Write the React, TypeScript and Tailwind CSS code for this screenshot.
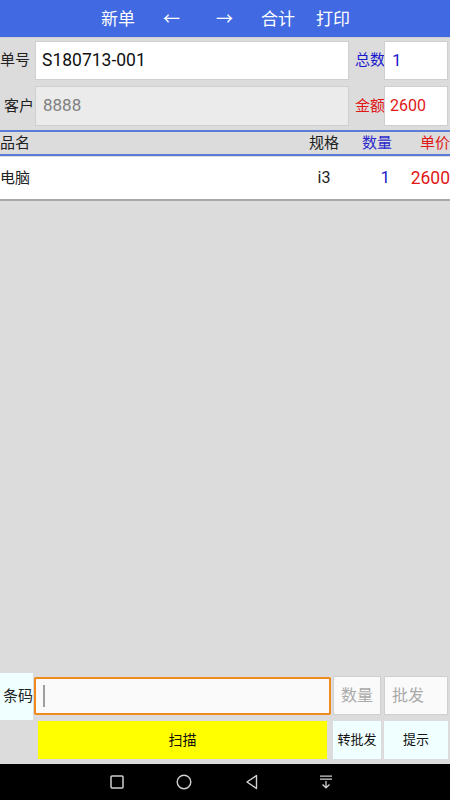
import React from "react";

const font = { fontFamily: '"Roboto", "Noto Sans CJK SC", sans-serif' };

export default function App() {
  return (
    <div className="w-[450px] h-[800px] flex flex-col bg-[#dcdcdc] overflow-hidden" style={font}>
      {/* Header */}
      <div className="h-[37px] bg-[#4169e1] flex items-center pt-[3px] text-white text-[17px] shrink-0">
        <span className="ml-[101px]">新单</span>
        <span className="ml-[28px]">←</span>
        <span className="ml-[36px]">→</span>
        <span className="ml-[28px]">合计</span>
        <span className="ml-[21px]">打印</span>
      </div>
      <div className="h-[1px] bg-[#cfcfcf]" />

      {/* Row 1 */}
      <div className="flex items-center mt-[3px] h-[39px]">
        <div className="w-[35px] text-[15px] text-[#222]">单号</div>
        <div className="w-[314px] h-[39px] bg-white border border-[#cfcfcf] flex items-center pl-[6px] text-[17.5px] text-[#111]">
          S180713-001
        </div>
        <div className="w-[35px] text-[15px] text-[#1a1acd] pl-[6px] whitespace-nowrap">总数</div>
        <div className="w-[64px] h-[39px] bg-white border border-[#cfcfcf] flex items-center pl-[7px] text-[17px] text-[#1a1acd]">
          1
        </div>
      </div>

      {/* Row 2 */}
      <div className="flex items-center mt-[6px] h-[40px]">
        <div className="w-[35px] text-[15px] text-[#222] pl-[4px]">客户</div>
        <div className="w-[314px] h-[40px] bg-[#ebebeb] border border-[#cfcfcf] flex items-center pl-[7px] text-[17px] text-[#808080]">
          8888
        </div>
        <div className="w-[35px] text-[15px] text-[#e01818] pl-[6px] whitespace-nowrap">金额</div>
        <div className="w-[64px] h-[40px] bg-white border border-[#cfcfcf] flex items-center pl-[5px] text-[16px] text-[#e01818]">
          2600
        </div>
      </div>

      {/* Table header */}
      <div className="mt-[4px] h-[2px] bg-[#5b7bd5]" />
      <div className="h-[22px] flex items-center text-[15px] bg-[#dcdcdc] whitespace-nowrap">
        <div className="flex-1 text-[#222]">品名</div>
        <div className="w-[48px] text-center text-[#222]">规格</div>
        <div className="w-[44px] text-right text-[#2a2acd]">数量</div>
        <div className="w-[58px] text-right text-[#e01818]">单价</div>
      </div>
      <div className="h-[2px] bg-[#5b7bd5]" />
      <div className="h-[42px] bg-white flex items-center text-[15px] mt-[1px] whitespace-nowrap">
        <div className="flex-1 text-[#222]">电脑</div>
        <div className="w-[48px] text-center text-[#222] text-[16px]">i3</div>
        <div className="w-[42px] text-right text-[#1a1acd] text-[17px]">1</div>
        <div className="w-[60px] text-right text-[#e01818] text-[17.5px]">2600</div>
      </div>
      <div className="h-[2px] bg-[#a8a8a8]" />

      <div className="flex-1" />

      {/* Bottom area */}
      <div className="flex h-[47px] items-start">
        <div className="w-[33px] h-[47px] bg-[#f0ffff] flex items-center text-[15px] text-[#222] pl-[3px]">条码</div>
        <div className="ml-[1px] mt-[4px] w-[297px] h-[38px] bg-[#fafafa] border-2 border-[#f08a1c] rounded-[2px] flex items-center pl-[7px]">
          <div className="w-[2px] h-[22px] bg-[#9e9e9e]" />
        </div>
        <div className="ml-[2px] mt-[3px] w-[48px] h-[39px] bg-[#fafafa] border border-[#cfcfcf] flex items-center justify-center text-[16px] text-[#aaaaaa]">
          数量
        </div>
        <div className="ml-[3px] mt-[3px] w-[64px] h-[39px] bg-[#fafafa] border border-[#cfcfcf] flex items-center pl-[7px] text-[16px] text-[#aaaaaa]">
          批发
        </div>
      </div>
      <div className="flex h-[38px] mt-[1px]">
        <div className="ml-[38px] w-[289px] bg-[#ffff00] flex items-center justify-center text-[14px] text-[#111]">扫描</div>
        <div className="ml-[6px] w-[48px] bg-[#f0ffff] flex items-center justify-center text-[13px] text-[#111]">转批发</div>
        <div className="ml-[3px] w-[64px] bg-[#f0ffff] flex items-center justify-center text-[13px] text-[#111]">提示</div>
      </div>
      <div className="h-[5px]" />

      {/* Nav bar */}
      <div className="h-[36px] bg-black relative shrink-0">
        <svg className="absolute left-[110px] top-[11px]" width="14" height="14" viewBox="0 0 14 14">
          <rect x="1" y="1" width="12" height="12" fill="none" stroke="#d0d0d0" strokeWidth="1.5" rx="1" />
        </svg>
        <svg className="absolute left-[176px] top-[10px]" width="16" height="16" viewBox="0 0 16 16">
          <circle cx="8" cy="8" r="6.8" fill="none" stroke="#d0d0d0" strokeWidth="1.4" />
        </svg>
        <svg className="absolute left-[245px] top-[10px]" width="14" height="16" viewBox="0 0 14 16">
          <path d="M11.5 1.5 L2 8 L11.5 14.5 Z" fill="none" stroke="#d0d0d0" strokeWidth="1.4" strokeLinejoin="round" />
        </svg>
        <svg className="absolute left-[319px] top-[11px]" width="14" height="14" viewBox="0 0 14 14">
          <path d="M1 1.2 H13 M1 4.2 H13 M7 6 V12.5 M3.5 9.5 L7 12.8 L10.5 9.5" fill="none" stroke="#d0d0d0" strokeWidth="1.3" />
        </svg>
      </div>
    </div>
  );
}
